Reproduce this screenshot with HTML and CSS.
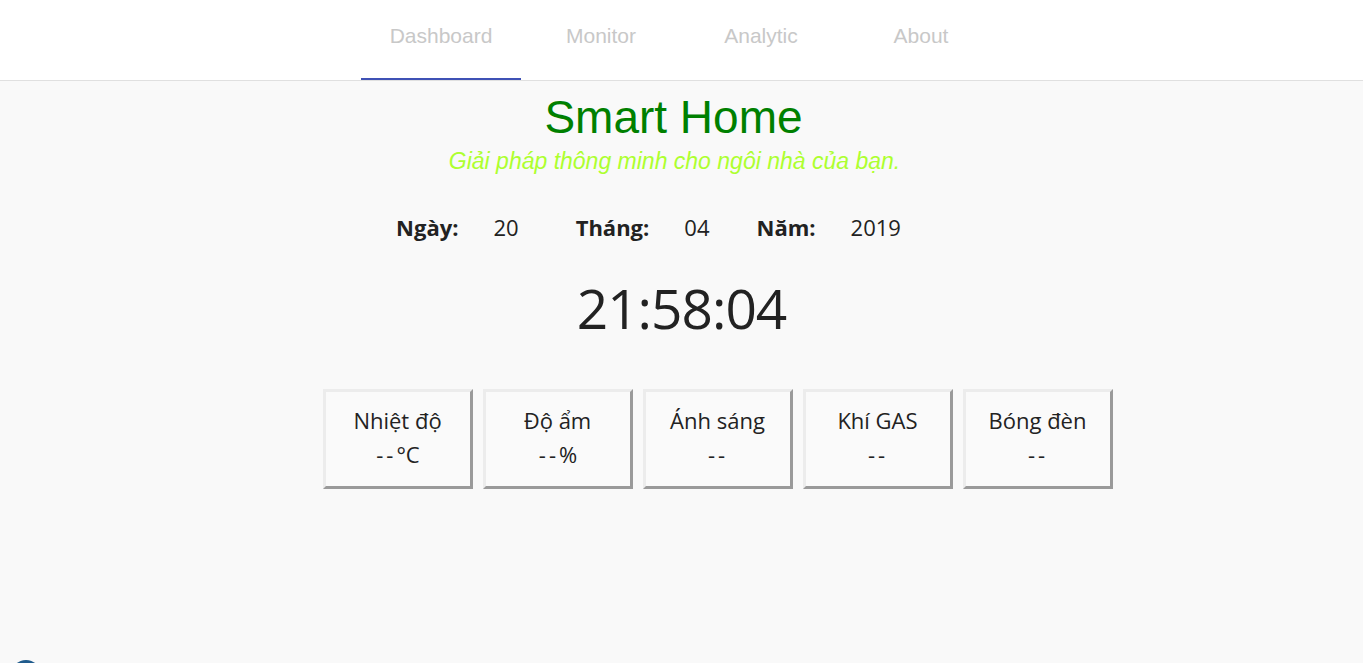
FILE: index.html
```html
<!DOCTYPE html>
<html lang="vi">
<head>
<meta charset="utf-8">
<title>Smart Home</title>
<link rel="stylesheet" href="styles.css">
</head>
<body>
<header class="topbar">
  <nav class="tabs">
    <a class="tab active">Dashboard</a>
    <a class="tab">Monitor</a>
    <a class="tab">Analytic</a>
    <a class="tab">About</a>
  </nav>
</header>
<main class="content">
  <h1 class="title">Smart Home</h1>
  <p class="subtitle">Giải pháp thông minh cho ngôi nhà của bạn.</p>
  <div class="date">
    <span class="label">Ngày:</span><span class="value v1">20</span>
    <span class="label">Tháng:</span><span class="value v2">04</span>
    <span class="label">Năm:</span><span class="value">2019</span>
  </div>
  <div class="clock">21:58:04</div>
  <div class="cards">
    <div class="card"><div class="name">Nhiệt độ</div><div class="val"><span class="dash">--</span>°C</div></div>
    <div class="card"><div class="name">Độ ẩm</div><div class="val"><span class="dash">--</span>%</div></div>
    <div class="card"><div class="name">Ánh sáng</div><div class="val"><span class="dash">--</span></div></div>
    <div class="card"><div class="name">Khí GAS</div><div class="val"><span class="dash">--</span></div></div>
    <div class="card"><div class="name">Bóng đèn</div><div class="val"><span class="dash">--</span></div></div>
  </div>
</main>
<div class="fab"></div>
</body>
</html>
```
FILE: styles.css
```css
html, body {
  margin: 0;
  padding: 0;
  height: 100%;
  overflow: hidden;
}
body {
  background: #f9f9f9;
  font-family: "Open Sans", "Noto Sans", sans-serif;
  color: #222;
}
.topbar {
  background: #fff;
  height: 80px;
  border-bottom: 1px solid #e0e0e0;
  display: flex;
  justify-content: center;
}
.tabs {
  display: flex;
  margin-left: -1px;
}
.tab {
  width: 160px;
  height: 80px;
  box-sizing: border-box;
  display: flex;
  justify-content: center;
  padding-top: 24px;
  font-family: "Liberation Sans", Arial, sans-serif;
  font-size: 21px;
  color: #c8c8c8;
  border-bottom: 2px solid transparent;
}
.tab.active {
  border-bottom-color: #3f51b5;
}
.content {
  display: flex;
  flex-direction: column;
  align-items: center;
}
.title {
  margin: 10px 0 0 -16px;
  font-family: "Liberation Sans", Arial, sans-serif;
  font-weight: normal;
  font-size: 46px;
  line-height: 53px;
  color: #008000;
}
.subtitle {
  margin: 4px 0 0 -14px;
  font-family: "Liberation Sans", Arial, sans-serif;
  font-style: italic;
  font-size: 23px;
  line-height: 26px;
  color: #adff2f;
}
.date {
  margin-top: 38px;
  display: flex;
  align-items: baseline;
  font-size: 22px;
  line-height: 30px;
  margin-left: -66px;
}
.label {
  font-weight: bold;
  margin-right: 35px;
}
.value.v1 { margin-right: 57px; }
.value.v2 { margin-right: 47px; }
.clock {
  margin-top: 26px;
  font-size: 55px;
  line-height: 80px;
  letter-spacing: -1px;
}
.cards {
  margin-top: 41px;
  display: flex;
  gap: 10px;
  margin-left: 72px;
}
.card {
  width: 150px;
  height: 100px;
  box-sizing: border-box;
  border: 3px solid;
  border-color: #ececec #9a9a9a #9a9a9a #ececec;
  background: #fafafa;
  display: flex;
  flex-direction: column;
  align-items: center;
  padding-top: 11px;
  font-size: 22px;
  line-height: 34px;
}
.dash {
  letter-spacing: 3px;
}
.val {
  margin-right: -1px;
}
.fab {
  position: fixed;
  left: 12px;
  top: 660px;
  width: 28px;
  height: 28px;
  border-radius: 50%;
  background: #1f5b8c;
}
```
